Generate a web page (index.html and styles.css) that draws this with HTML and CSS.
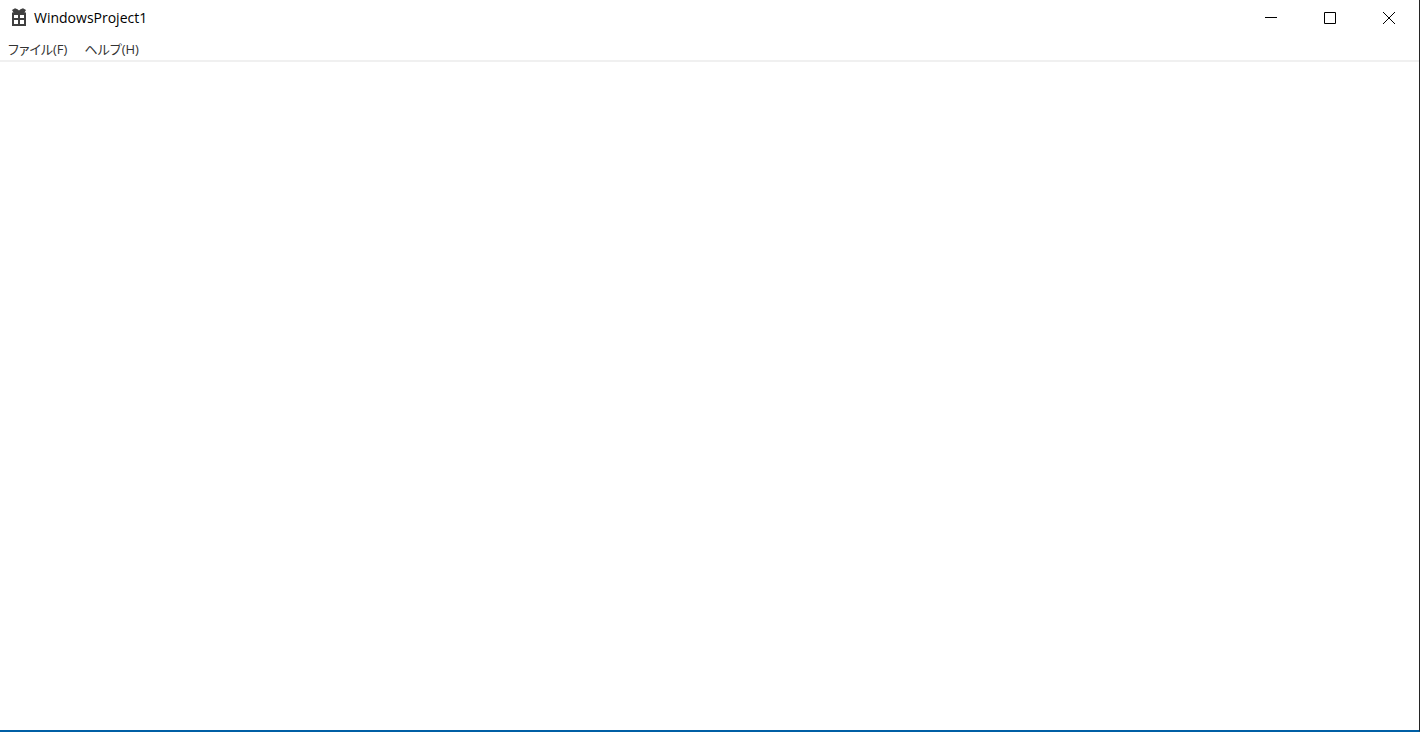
FILE: index.html
```html
<!DOCTYPE html>
<html lang="ja">
    <head>
        <meta charset="UTF-8" />
        <meta name="viewport" content="width=device-width, initial-scale=1.0" />
        <title>WindowsProject1</title>
        <link rel="stylesheet" href="styles.css">
    </head>
    <body>
        <div class="window">
            <header class="title-bar">
                <svg class="app-icon" width="16" height="20" viewBox="0 0 16 20" aria-hidden="true">
                    <path fill="#404040" d="M1 2L4 0.3L6.5 1.2L8 2.5L9.5 1.2L12 0.3L15 2L13.5 4.6H15V18H1V4.6H2.5Z" />
                    <path fill="#fff" d="M3 7h4v3H3zM9 7h4v3H9zM3 12h4v4H3zM9 12h4v4H9z" />
                </svg>
                <h1 class="title">WindowsProject1</h1>
                <div class="window-controls">
                    <button type="button" aria-label="最小化">
                        <svg width="12" height="12" viewBox="0 0 12 12">
                            <path fill="#000" d="M0 5h12v1H0z" />
                        </svg>
                    </button>
                    <button type="button" aria-label="最大化">
                        <svg width="12" height="12" viewBox="0 0 12 12">
                            <path fill="none" stroke="#000" d="M.5 .5h11v11H.5z" />
                        </svg>
                    </button>
                    <button type="button" aria-label="閉じる">
                        <svg width="12" height="12" viewBox="0 0 12 12">
                            <path fill="none" stroke="#000" d="M0 0l12 12M12 0L0 12" />
                        </svg>
                    </button>
                </div>
            </header>

            <nav class="menu-bar">
                <button type="button">ファイル(F)</button>
                <button type="button">ヘルプ(H)</button>
            </nav>

            <main class="client-area"></main>
        </div>
    </body>
</html>
```

FILE: styles.css
```css
body {
    margin: 0;
    font-family: "Open Sans", "Noto Sans CJK JP", sans-serif;
    color: #000;
    background: #fff;
}

.window {
    display: flex;
    flex-direction: column;
    box-sizing: border-box;
    min-height: 100vh;
    border-right: 1px solid #242424;
    border-bottom: 2px solid #005fa5;
}

.title-bar {
    display: flex;
    align-items: center;
    height: 36px;
    padding: 0 1px 0 11px;
}

.app-icon {
    margin-right: 7px;
}

.title {
    flex: 1;
    margin: 0;
    font-size: 14px;
    line-height: 20px;
    font-weight: normal;
}

.window-controls {
    display: flex;
    gap: 1px;
    height: 100%;
}

button {
    padding: 0;
    border: none;
    background: none;
    color: inherit;
    font-family: inherit;
}

.window-controls button {
    display: flex;
    align-items: center;
    justify-content: center;
    width: 58px;
}

.window-controls button:hover {
    background: #e5e5e5;
}

.menu-bar {
    display: flex;
    gap: 1px;
    height: 24px;
    border-bottom: 2px solid #f0f0f0;
}

/* proportional kana, like the system menu font */
.menu-bar button {
    padding: 0 8px;
    font-size: 13px;
    font-feature-settings: "palt";
    color: #333;
}

.menu-bar button:hover {
    background: #e5f3ff;
}

.client-area {
    flex: 1;
}
```
